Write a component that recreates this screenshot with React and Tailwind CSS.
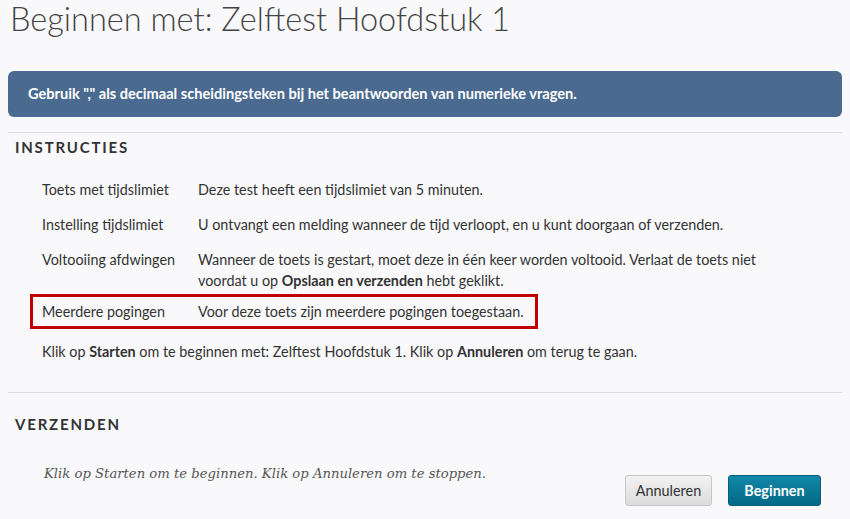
import React from "react";

const rows = [
  ["Toets met tijdslimiet", <>Deze test heeft een tijdslimiet van 5 minuten.</>],
  ["Instelling tijdslimiet", <>U ontvangt een melding wanneer de tijd verloopt, en u kunt doorgaan of verzenden.</>],
  [
    "Voltooiing afdwingen",
    <>
      Wanneer de toets is gestart, moet deze in één keer worden voltooid. Verlaat de toets niet voordat u op{" "}
      <b className="font-bold">Opslaan en verzenden</b> hebt geklikt.
    </>,
  ],
];

export default function App() {
  return (
    <div
      className="w-[850px] h-[519px] overflow-hidden bg-[#f9f9fb] text-[#333]"
      style={{ fontFamily: "Lato, 'Open Sans', sans-serif" }}
    >
      <h1 className="pl-[10px] pt-[1px] text-[32.5px] leading-[36px] font-light text-[#444]">
        Beginnen met: Zelftest Hoofdstuk 1
      </h1>

      <div className="mx-[8px] mt-[34px] h-[46px] rounded-[6px] bg-[#4a6a90] flex items-center pl-[20px] text-white text-[14.6px] font-bold">
        Gebruik "," als decimaal scheidingsteken bij het beantwoorden van numerieke vragen.
      </div>

      <div className="mx-[8px] mt-[15px] border-t border-[#dcdcdc]" />

      <h2 className="pl-[15px] mt-[4px] text-[15px] leading-[20px] font-bold tracking-[0.12em] text-[#333]">
        INSTRUCTIES
      </h2>

      <div className="mt-[22px] text-[14.35px] leading-[21px] text-[#333]">
        {rows.map(([label, value], i) => (
          <div key={i} className="flex pl-[42px] mb-[14px]">
            <div className="w-[156px] shrink-0">{label}</div>
            <div className="w-[600px]">{value}</div>
          </div>
        ))}
        <div className="ml-[30px] w-[508px] h-[35px] border-[3px] border-[#c00000] flex items-center pl-[9px] -mt-[11px]">
          <div className="w-[156px] shrink-0">Meerdere pogingen</div>
          <div>Voor deze toets zijn meerdere pogingen toegestaan.</div>
        </div>
        <div className="pl-[42px] mt-[12px]">
          Klik op <b className="font-bold">Starten</b> om te beginnen met: Zelftest Hoofdstuk 1. Klik op{" "}
          <b className="font-bold">Annuleren</b> om terug te gaan.
        </div>
      </div>

      <div className="mx-[8px] mt-[30px] border-t border-[#dcdcdc]" />

      <h2 className="pl-[15px] mt-[21px] text-[15px] leading-[20px] font-bold tracking-[0.12em] text-[#333]">
        VERZENDEN
      </h2>

      <div className="flex items-start mt-[30px]">
        <p
          className="pl-[44px] italic text-[13.2px] leading-[20px] text-[#555]"
          style={{ fontFamily: "'DejaVu Serif', 'Liberation Serif', serif" }}
        >
          Klik op Starten om te beginnen. Klik op Annuleren om te stoppen.
        </p>
        <div className="ml-auto mr-[29px] mt-[11px] flex gap-[16px]">
          <button className="w-[87px] h-[31px] rounded-[3px] border border-[#c6c6c6] bg-gradient-to-b from-[#f2f2f2] to-[#dcdcdc] text-[14.4px] text-[#333]">
            Annuleren
          </button>
          <button className="w-[93px] h-[31px] rounded-[3px] border border-[#0a5d78] bg-gradient-to-b from-[#1287a8] to-[#036a87] text-[14.4px] font-bold text-white">
            Beginnen
          </button>
        </div>
      </div>
    </div>
  );
}
